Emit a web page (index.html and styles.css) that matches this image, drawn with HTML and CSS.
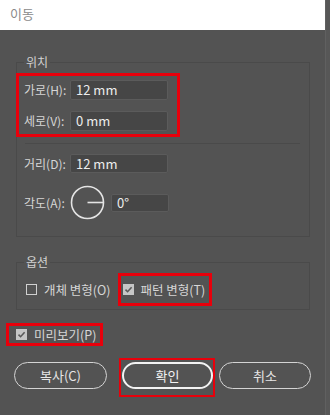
FILE: index.html
```html
<!DOCTYPE html>
<html>
<head>
    <meta charset="utf-8">
    <title>이동</title>
    <link rel="stylesheet" href="styles.css">
</head>
<body>
    <div class="window">
        <div class="titlebar">이동</div>

        <fieldset class="group group-position">
            <legend>위치</legend>
            <div class="mark mark-pos">
                <div class="row">
                    <label class="lbl">가로(H):</label>
                    <div class="field">12 mm</div>
                </div>
                <div class="row">
                    <label class="lbl">세로(V):</label>
                    <div class="field">0 mm</div>
                </div>
            </div>
            <div class="sep"></div>
            <div class="row row-dist">
                <label class="lbl">거리(D):</label>
                <div class="field">12 mm</div>
            </div>
            <div class="row row-angle">
                <label class="lbl lbl-angle">각도(A):</label>
                <svg class="dial" width="35" height="35" viewBox="0 0 35 35">
                    <circle cx="17.5" cy="17.5" r="16" fill="none" stroke="#e4e4e4" stroke-width="1.6"/>
                    <line x1="17.5" y1="17.5" x2="33.5" y2="17.5" stroke="#e4e4e4" stroke-width="1.6"/>
                </svg>
                <div class="field field-small">0°</div>
            </div>
        </fieldset>

        <fieldset class="group group-options">
            <legend>옵션</legend>
            <div class="opts">
                <div class="check">
                    <span class="box"></span>
                    <span>개체 변형(O)</span>
                </div>
                <div class="mark mark-pattern">
                    <div class="check">
                        <span class="box on">
                            <svg width="11" height="11" viewBox="0 0 11 11"><path d="M2.5 5.6 L4.6 7.7 L8.6 3.3" fill="none" stroke="#5a5a5a" stroke-width="1.6"/></svg>
                        </span>
                        <span>패턴 변형(T)</span>
                    </div>
                </div>
            </div>
        </fieldset>

        <div class="mark mark-preview">
            <div class="check">
                <span class="box on">
                    <svg width="11" height="11" viewBox="0 0 11 11"><path d="M2.5 5.6 L4.6 7.7 L8.6 3.3" fill="none" stroke="#5a5a5a" stroke-width="1.6"/></svg>
                </span>
                <span>미리보기(P)</span>
            </div>
        </div>

        <div class="buttons">
            <button class="btn btn-copy">복사(C)</button>
            <div class="mark mark-ok">
                <button class="btn btn-ok">확인</button>
            </div>
            <button class="btn btn-cancel">취소</button>
        </div>
    </div>
</body>
</html>
```

FILE: styles.css
```css
body {
    margin: 0;
    background-color: #575757;
    font-family: "Noto Sans CJK KR", "Noto Sans", sans-serif;
    font-size: 12px;
    color: #d6d6d6;
}
.window {
    width: 325px;
    height: 415px;
    background-color: #535353;
    border-right: 1px solid #606060;
}
.titlebar {
    height: 30px;
    line-height: 28px;
    background-color: #ffffff;
    color: #8a8a8a;
    font-size: 13px;
    padding-left: 10px;
}
.group {
    width: 294px;
    box-sizing: border-box;
    margin: 0 0 0 16px;
    padding: 0 0 0 7px;
    border: 1px solid #4a4a4a;
}
.group legend {
    padding: 0 2px;
    line-height: 16px;
    font-size: 12px;
    color: #d2d2d2;
}
.group-position {
    margin-top: 24px;
    padding-bottom: 16px;
}
.group-options {
    margin-top: 17px;
    padding-bottom: 3px;
}
.mark {
    border: 3px solid #e8000b;
    box-sizing: border-box;
}
.mark-pos {
    width: 164px;
    height: 64px;
    margin: 3px 0 0 -8px;
    padding: 4px 0 0 5px;
    display: flex;
    flex-direction: column;
    gap: 11px;
}
.row {
    display: flex;
    align-items: center;
    height: 20px;
}
.lbl {
    width: 46px;
    line-height: 16px;
    white-space: nowrap;
}
.field {
    width: 98px;
    height: 20px;
    box-sizing: border-box;
    background-color: #464646;
    border: 1px solid #5b5b5b;
    border-radius: 2px;
    padding-left: 5px;
    line-height: 18px;
    font-size: 13px;
    color: #ededed;
}
.sep {
    height: 1px;
    background-color: #4a4a4a;
    margin: 6px 9px 0 1px;
}
.row-dist {
    margin-top: 10px;
    height: 19px;
}
.row-dist .field {
    height: 19px;
}
.row-angle {
    margin-top: 12px;
    height: 35px;
}
.lbl-angle {
    width: 46px;
}
.dial {
    display: block;
}
.field-small {
    width: 58px;
    height: 18px;
    line-height: 16px;
    margin-left: 6px;
}
.opts {
    display: flex;
    align-items: center;
    margin: 3px 0 0 0;
}
.check {
    display: flex;
    align-items: center;
    gap: 7px;
    white-space: nowrap;
    line-height: 16px;
    font-size: 12.5px;
}
.opts > .check {
    margin-left: 2px;
}
.box {
    width: 11px;
    height: 11px;
    box-sizing: border-box;
    border: 1px solid #d0d0d0;
    display: block;
}
.box.on {
    background-color: #c6c6c6;
    border-color: #c6c6c6;
}
.box svg {
    display: block;
    margin: -1px;
}
.mark-pattern {
    width: 94px;
    height: 33px;
    margin-left: 7px;
    padding-left: 2px;
    display: flex;
    align-items: center;
}
.mark-preview {
    width: 97px;
    height: 23px;
    margin: 13px 0 0 6px;
    padding-left: 7px;
    display: flex;
    align-items: center;
}
.buttons {
    display: flex;
    align-items: flex-start;
    margin: 12px 0 0 14px;
}
.btn {
    height: 27px;
    box-sizing: border-box;
    border: 1.5px solid #d4d4d4;
    border-radius: 14px;
    background: transparent;
    color: #e6e6e6;
    font-family: "Noto Sans CJK KR", sans-serif;
    font-size: 13px;
    padding: 0;
    margin-top: 4px;
}
.btn-copy {
    width: 93px;
}
.mark-ok {
    width: 96px;
    height: 39px;
    margin-left: 12px;
    border-width: 2px;
    padding: 2px 0 0 1px;
}
.btn-ok {
    width: 91px;
    margin-top: 0;
    border: 2px solid #f2f2f2;
    color: #f2f2f2;
}
.btn-cancel {
    width: 92px;
    margin-left: 4px;
}
```
